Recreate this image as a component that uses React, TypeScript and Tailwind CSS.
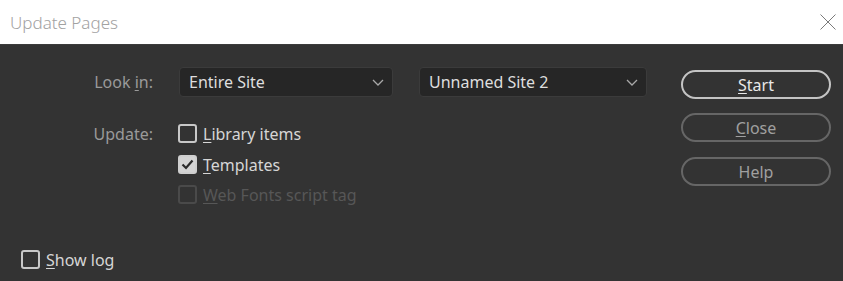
import { useState } from 'react';

function Chevron() {
  return (
    <svg width="12" height="7" viewBox="0 0 12 7" fill="none">
      <path d="M1 1l5 5 5-5" stroke="#a8a8a8" strokeWidth="1.3" />
    </svg>
  );
}

function Select({ value, width }: { value: string; width: string }) {
  return (
    <div
      className={`${width} h-[30px] flex items-center justify-between pl-[9px] pr-[8px] bg-[#262626] border border-[#3b3b3b] rounded-[4px] text-[#dedede]`}
    >
      <span>{value}</span>
      <Chevron />
    </div>
  );
}

function Checkbox({
  checked,
  disabled,
  onChange,
  children,
}: {
  checked: boolean;
  disabled?: boolean;
  onChange?: () => void;
  children: React.ReactNode;
}) {
  const box = disabled
    ? 'border-[#4a4a4a] bg-[#333333]'
    : checked
      ? 'border-[#cfcfcf] bg-[#d4d4d4]'
      : 'border-[#c8c8c8] bg-[#333333]';
  return (
    <div
      className={`flex items-center h-[19px] cursor-default ${disabled ? 'text-[#575757]' : 'text-[#d6d6d6]'}`}
      onClick={disabled ? undefined : onChange}
    >
      <div className={`w-[19px] h-[19px] border-2 rounded-[3px] flex items-center justify-center ${box}`}>
        {checked && (
          <svg width="13" height="11" viewBox="0 0 13 11" fill="none">
            <path d="M1.5 5.5l3.5 3.5 6.5-7.5" stroke="#2a2a2a" strokeWidth="2.2" />
          </svg>
        )}
      </div>
      <span className="ml-[6px]">{children}</span>
    </div>
  );
}

export default function App() {
  const [library, setLibrary] = useState(false);
  const [templates, setTemplates] = useState(true);
  const [showLog, setShowLog] = useState(false);

  return (
    <div
      className="w-[843px] h-[281px] flex flex-col text-[16px] leading-none"
      style={{ fontFamily: '"Noto Sans", "Open Sans", sans-serif' }}
    >
      {/* Title bar */}
      <div className="h-[44px] bg-white flex items-center justify-between pl-[10px] pr-[7px]">
        <span className="text-[17px] text-[#a2a2a2] font-light">Update Pages</span>
        <svg width="16" height="16" viewBox="0 0 16 16" fill="none">
          <path d="M0.5 0.5l15 15M15.5 0.5l-15 15" stroke="#7a7a7a" strokeWidth="1" />
        </svg>
      </div>

      {/* Body */}
      <div className="flex-1 flex flex-col bg-[#333333] border-t border-[#3c3c3c]">
        <div className="flex pt-[22px]">
          <div className="w-[681px] flex flex-col">
            <div className="flex items-center h-[30px]">
              <div className="w-[153px] text-right text-[#9a9a9a]">
                Look <span className="underline underline-offset-2">i</span>n:
              </div>
              <div className="ml-[26px]">
                <Select value="Entire Site" width="w-[214px]" />
              </div>
              <div className="ml-[26px]">
                <Select value="Unnamed Site 2" width="w-[228px]" />
              </div>
            </div>

            <div className="flex mt-[27px]">
              <div className="w-[153px] h-[19px] flex items-center justify-end text-[#9a9a9a]">Update:</div>
              <div className="ml-[25px] flex flex-col">
                <Checkbox checked={library} onChange={() => setLibrary(!library)}>
                  <span className="underline underline-offset-2">L</span>ibrary items
                </Checkbox>
                <div className="mt-[12px]">
                  <Checkbox checked={templates} onChange={() => setTemplates(!templates)}>
                    <span className="underline underline-offset-2">T</span>emplates
                  </Checkbox>
                </div>
                <div className="mt-[11px]">
                  <Checkbox checked={false} disabled>
                    <span className="underline underline-offset-2">W</span>eb Fonts script tag
                  </Checkbox>
                </div>
              </div>
            </div>
          </div>

          {/* Buttons */}
          <div className="flex flex-col mt-[3px]">
            <button className="w-[150px] h-[29px] rounded-full border-2 border-[#c4c4c4] text-[#e8e8e8]">
              <span className="underline underline-offset-2">S</span>tart
            </button>
            <button className="mt-[14px] w-[150px] h-[29px] rounded-full border-2 border-[#666666] text-[#a0a0a0]">
              <span className="underline underline-offset-2">C</span>lose
            </button>
            <button className="mt-[15px] w-[150px] h-[29px] rounded-full border-2 border-[#666666] text-[#a0a0a0]">
              Help
            </button>
          </div>
        </div>

        <div className="mt-auto pl-[21px] pb-[12px]">
          <Checkbox checked={showLog} onChange={() => setShowLog(!showLog)}>
            <span className="underline underline-offset-2">S</span>how log
          </Checkbox>
        </div>
      </div>
    </div>
  );
}
